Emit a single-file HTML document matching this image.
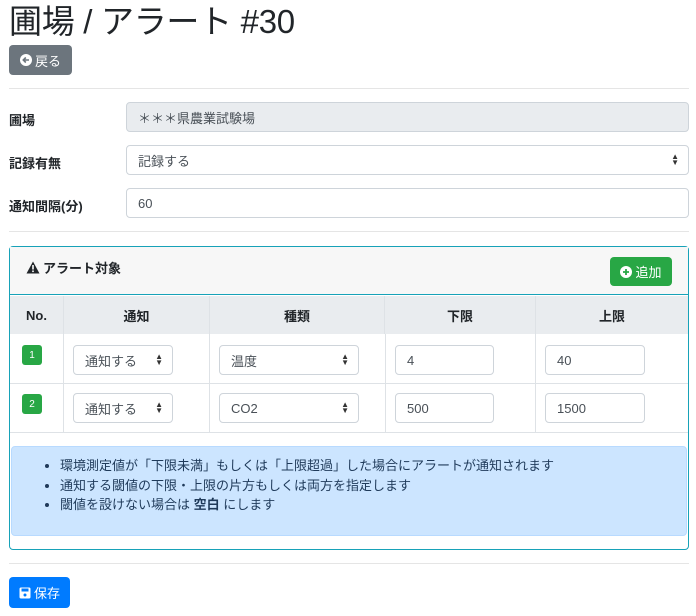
<!DOCTYPE html>
<html><head><meta charset="utf-8"><style>
*{box-sizing:border-box;margin:0;padding:0}
body{width:696px;height:616px;background:#fff;font-family:"Liberation Sans","Noto Sans CJK JP",sans-serif;color:#212529;font-size:13px;position:relative;overflow:hidden}
.a{position:absolute}
h1{position:absolute;left:9px;top:1px;font-size:33px;font-weight:400;line-height:42px;letter-spacing:-0.3px}
.btn{position:absolute;color:#fff;border-radius:4px;display:flex;align-items:center;justify-content:center;font-size:13px;gap:3px}
.hr{position:absolute;left:9px;width:680px;height:1px;background:#e5e5e5}
.lbl{position:absolute;left:9px;font-weight:bold;font-size:13px}
.inp{position:absolute;border:1px solid #ced4da;border-radius:4px;background:#fff;display:flex;align-items:center;padding-left:11px;font-size:13px;color:#495057}
.arr{position:absolute;right:9px;top:50%;transform:translateY(-50%);font-size:8px;line-height:6px;color:#333;text-align:center}
.th{position:absolute;top:296px;height:38px;display:flex;align-items:center;justify-content:center;font-weight:bold;font-size:13px;border-right:1px solid #dee2e6}
.vl{position:absolute;width:1px;background:#dee2e6}
.badge{position:absolute;left:22px;width:20px;height:20px;background:#28a745;color:#fff;border-radius:3px;font-size:10px;display:flex;align-items:center;justify-content:center}
</style></head><body>
<h1>圃場 / アラート #30</h1>
<div class="btn" style="left:9px;top:45px;width:63px;height:30px;background:#6c757d"><svg width="12" height="12" viewBox="0 0 12 12"><circle cx="6" cy="6" r="6" fill="#fff"/><path d="M9 6H3.5M5.8 3.5L3.3 6l2.5 2.5" stroke="#6c757d" stroke-width="1.6" fill="none"/></svg>戻る</div>
<div class="hr" style="top:88px"></div>
<div class="lbl" style="top:110px">圃場</div>
<div class="inp" style="left:126px;top:102px;width:563px;height:30px;background:#e9ecef">＊＊＊県農業試験場</div>
<div class="lbl" style="top:153px">記録有無</div>
<div class="inp" style="left:126px;top:145px;width:563px;height:30px">記録する<div class="arr">▲<br>▼</div></div>
<div class="lbl" style="top:196px">通知間隔(分)</div>
<div class="inp" style="left:126px;top:188px;width:563px;height:30px">60</div>
<div class="hr" style="top:231px"></div>

<div class="a" style="left:9px;top:246px;width:680px;height:304px;border:1px solid #17a2b8;border-radius:4px"></div>
<div class="a" style="left:10px;top:247px;width:678px;height:48px;background:#f7f7f7;border-bottom:1px solid #17a2b8"></div>
<div class="a" style="left:26px;top:258px;font-weight:bold;font-size:13px;display:flex;align-items:center;gap:3px"><svg width="14" height="13" viewBox="0 0 14 13"><path d="M7 0.5L13.5 12.5H0.5Z" fill="#212529"/><rect x="6.2" y="4" width="1.6" height="4.5" fill="#fff"/><rect x="6.2" y="9.5" width="1.6" height="1.6" fill="#fff"/></svg>アラート対象</div>
<div class="btn" style="left:610px;top:257px;width:62px;height:29px;background:#28a745"><svg width="12" height="12" viewBox="0 0 12 12"><circle cx="6" cy="6" r="6" fill="#fff"/><path d="M6 3v6M3 6h6" stroke="#28a745" stroke-width="1.8"/></svg>追加</div>
<div class="a" style="left:10px;top:296px;width:678px;height:38px;background:#e9ecef"></div>
<div class="th" style="left:10px;width:54px">No.</div>
<div class="th" style="left:64px;width:146px">通知</div>
<div class="th" style="left:210px;width:175px">種類</div>
<div class="th" style="left:385px;width:151px">下限</div>
<div class="th" style="left:536px;width:152px;border-right:none">上限</div>
<div class="vl" style="left:63px;top:334px;height:98px"></div>
<div class="vl" style="left:209px;top:334px;height:98px"></div>
<div class="vl" style="left:385px;top:334px;height:98px"></div>
<div class="vl" style="left:535px;top:334px;height:98px"></div>
<div class="a" style="left:10px;top:383px;width:678px;height:1px;background:#dee2e6"></div>
<div class="a" style="left:10px;top:432px;width:678px;height:1px;background:#dee2e6"></div>

<div class="badge" style="top:345px">1</div>
<div class="inp" style="left:73px;top:345px;width:100px;height:30px">通知する<div class="arr">▲<br>▼</div></div>
<div class="inp" style="left:219px;top:345px;width:140px;height:30px">温度<div class="arr">▲<br>▼</div></div>
<div class="inp" style="left:395px;top:345px;width:99px;height:30px">4</div>
<div class="inp" style="left:545px;top:345px;width:100px;height:30px">40</div>

<div class="badge" style="top:394px">2</div>
<div class="inp" style="left:73px;top:393px;width:100px;height:30px">通知する<div class="arr">▲<br>▼</div></div>
<div class="inp" style="left:219px;top:393px;width:140px;height:30px">CO2<div class="arr">▲<br>▼</div></div>
<div class="inp" style="left:395px;top:393px;width:99px;height:30px">500</div>
<div class="inp" style="left:545px;top:393px;width:100px;height:30px">1500</div>

<div class="a" style="left:11px;top:446px;width:676px;height:90px;background:#cce5ff;border:1px solid #b8daff;border-radius:4px;color:#004085"></div>
<ul class="a" style="left:44px;top:456px;font-size:13px;line-height:19.5px;color:#1f3a5a;padding-left:16px">
<li>環境測定値が「下限未満」もしくは「上限超過」した場合にアラートが通知されます</li>
<li>通知する閾値の下限・上限の片方もしくは両方を指定します</li>
<li>閾値を設けない場合は <b>空白</b> にします</li>
</ul>
<div class="hr" style="top:563px"></div>
<div class="btn" style="left:9px;top:577px;width:61px;height:31px;background:#007bff"><svg width="12" height="12" viewBox="0 0 12 12"><rect x="0.5" y="0.5" width="11" height="11" rx="1.5" fill="#fff"/><rect x="2.5" y="1.5" width="7" height="3" fill="#007bff"/><circle cx="6" cy="8" r="1.5" fill="#007bff"/></svg>保存</div>
</body></html>
